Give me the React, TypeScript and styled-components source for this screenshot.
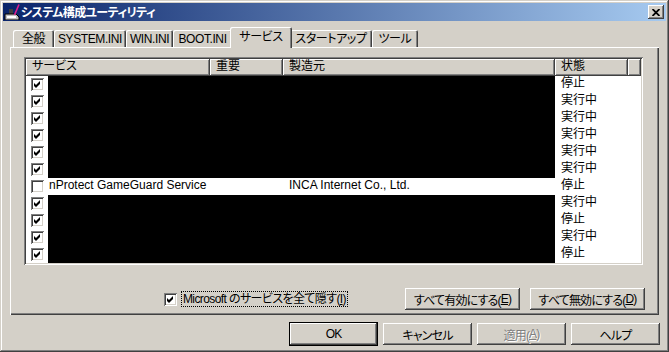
import React from "react";
import styled, { createGlobalStyle, css } from "styled-components";

const GlobalStyle = createGlobalStyle`
  html, body {
    margin: 0;
    padding: 0;
    background: #d4d0c8;
  }
  body {
    font-family: "Liberation Sans", "Noto Sans CJK JP", sans-serif;
    font-size: 12px;
    font-feature-settings: "palt";
    color: #000;
  }
`;

const raised = css`
  box-shadow: inset -1px -1px #404040, inset 1px 1px #fff, inset -2px -2px #808080, inset 2px 2px #d4d0c8;
`;

type Service = {
  checked: boolean;
  name?: string;
  maker?: string;
  status: string;
};

const services: Service[] = [
  { checked: true, status: "停止" },
  { checked: true, status: "実行中" },
  { checked: true, status: "実行中" },
  { checked: true, status: "実行中" },
  { checked: true, status: "実行中" },
  { checked: true, status: "実行中" },
  { checked: false, name: "nProtect GameGuard Service", maker: "INCA Internet Co., Ltd.", status: "停止" },
  { checked: true, status: "実行中" },
  { checked: true, status: "停止" },
  { checked: true, status: "実行中" },
  { checked: true, status: "停止" },
];

const tabs = [
  { label: "全般", w: 41 },
  { label: "SYSTEM.INI", w: 72 },
  { label: "WIN.INI", w: 47 },
  { label: "BOOT.INI", w: 59 },
  { label: "サービス", w: 62, active: true },
  { label: "スタートアップ", w: 82 },
  { label: "ツール", w: 46 },
];

const columns = [
  { label: "サービス", w: 184 },
  { label: "重要", w: 73 },
  { label: "製造元", w: 272 },
  { label: "状態", w: 73 },
];

const Check = ({ checked }: { checked: boolean }) => (
  <CheckBox>
    {checked && (
      <svg width="13" height="13" viewBox="0 0 13 13">
        <polygon points="3,5 5,7 9,3 9,6 5,10 3,8" fill="#000" />
      </svg>
    )}
  </CheckBox>
);

const AppIcon = () => (
  <svg width="16" height="16" viewBox="0 0 16 16">
    <rect x="5" y="5" width="4" height="5" fill="#404040" />
    <polygon points="1,10 12,10 15,13 15,16 1,16" fill="#c0c0c0" stroke="#000" strokeWidth="1" />
    <rect x="3" y="12" width="9" height="2" fill="#fff" />
    <line x1="15" y1="0.5" x2="10.5" y2="11" stroke="#e0208f" strokeWidth="1.6" />
  </svg>
);

export default function App() {
  return (
    <>
      <GlobalStyle />
      <Window>
        <TitleBar>
          <AppIcon />
          <Title>システム構成ユーティリティ</Title>
          <CloseButton>
            <svg width="8" height="7" viewBox="0 0 8 7">
              <path d="M0.5 0 L7.5 7 M7.5 0 L0.5 7" stroke="#000" strokeWidth="1.8" />
            </svg>
          </CloseButton>
        </TitleBar>

        <Content>
          <TabStrip>
            {tabs.map((t) => (
              <Tab key={t.label} $w={t.w} $active={t.active}>
                {t.label}
              </Tab>
            ))}
          </TabStrip>

          <Panel>
            <ListView>
              <HeaderRow>
                {columns.map((c) => (
                  <HeaderCell key={c.label} $w={c.w}>
                    {c.label}
                  </HeaderCell>
                ))}
                <HeaderCell />
              </HeaderRow>
              {services.map((s, i) => (
                <Row key={i}>
                  <CheckCell>
                    <Check checked={s.checked} />
                  </CheckCell>
                  {s.name ? (
                    <>
                      <Cell $w={162} $pad={1}>{s.name}</Cell>
                      <Cell $w={73} $pad={6} />
                      <Cell $w={272} $pad={6}>{s.maker}</Cell>
                    </>
                  ) : (
                    <Blackout />
                  )}
                  <Cell $pad={6}>{s.status}</Cell>
                </Row>
              ))}
            </ListView>

            <PanelFooter>
              <HideOption>
                <Check checked />
                <FocusLabel>
                  Microsoft のサービスを全て隠す(<u>I</u>)
                </FocusLabel>
              </HideOption>
              <Button $w={115}>
                すべて有効にする(<u>E</u>)
              </Button>
              <Button $w={115}>
                すべて無効にする(<u>D</u>)
              </Button>
            </PanelFooter>
          </Panel>

          <DialogButtons>
            <Button $w={89} $default>OK</Button>
            <Button $w={89}>キャンセル</Button>
            <Button $w={89} $disabled>
              適用(<u>A</u>)
            </Button>
            <Button $w={89}>ヘルプ</Button>
          </DialogButtons>
        </Content>
      </Window>
    </>
  );
}

const Window = styled.div`
  width: 669px;
  height: 352px;
  box-sizing: border-box;
  padding: 3px;
  background: #d4d0c8;
  display: flex;
  flex-direction: column;
  box-shadow: inset -1px -1px #404040, inset 1px 1px #d4d0c8, inset -2px -2px #808080, inset 2px 2px #fff;
`;

const TitleBar = styled.div`
  height: 18px;
  display: flex;
  align-items: center;
  gap: 1px;
  padding: 0 2px 0 1px;
  background: linear-gradient(to right, #0a246a, #a6caf0);
`;

const Title = styled.span`
  flex: 1;
  color: #fff;
  font-weight: bold;
  font-size: 12px;
  letter-spacing: -0.6px;
  line-height: 18px;
  font-family: "Noto Sans CJK JP", sans-serif;
`;

const CloseButton = styled.div`
  width: 16px;
  height: 14px;
  display: flex;
  align-items: center;
  justify-content: center;
  background: #d4d0c8;
  ${raised};
`;

const Content = styled.div`
  flex: 1;
  display: flex;
  flex-direction: column;
  padding: 6px 7px 0 7px;
`;

const TabStrip = styled.div`
  height: 20px;
  display: flex;
  align-items: flex-end;
  padding-left: 3px;
`;

const Tab = styled.div<{ $w: number; $active?: boolean }>`
  width: ${(p) => p.$w}px;
  height: ${(p) => (p.$active ? 21 : 17)}px;
  margin: 0 ${(p) => (p.$active ? -2 : 0)}px ${(p) => (p.$active ? -1 : 0)}px;
  box-sizing: border-box;
  flex-shrink: 0;
  display: flex;
  align-items: center;
  justify-content: center;
  padding-bottom: ${(p) => (p.$active ? 2 : 0)}px;
  position: relative;
  z-index: ${(p) => (p.$active ? 1 : 0)};
  background: #d4d0c8;
  border-radius: 2px 2px 0 0;
  line-height: 14px;
  letter-spacing: -0.4px;
  white-space: nowrap;
  box-shadow: inset 1px 1px #fff, inset -1px 0 #404040, inset -2px 0 #808080;
`;

const Panel = styled.div`
  height: 268px;
  box-sizing: border-box;
  padding: 10px 14px 5px 14px;
  display: flex;
  flex-direction: column;
  box-shadow: inset 1px 1px #fff, inset -1px -1px #404040, inset -2px -2px #808080;
`;

const ListView = styled.div`
  width: 619px;
  height: 208px;
  box-sizing: border-box;
  padding: 2px;
  background: #fff;
  overflow: hidden;
  box-shadow: inset 1px 1px #808080, inset -1px -1px #fff, inset 2px 2px #404040, inset -2px -2px #d4d0c8;
`;

const HeaderRow = styled.div`
  display: flex;
  height: 17px;
`;

const HeaderCell = styled.div<{ $w?: number }>`
  ${(p) => (p.$w ? `width: ${p.$w}px;` : "flex: 1;")}
  box-sizing: border-box;
  padding-left: 6px;
  background: #d4d0c8;
  line-height: 15px;
  white-space: nowrap;
  ${raised};
`;

const Row = styled.div`
  display: flex;
  height: 17px;
`;

const CheckCell = styled.div`
  width: 22px;
  flex-shrink: 0;
  display: flex;
  align-items: center;
  padding-left: 5px;
  box-sizing: border-box;
`;

const Cell = styled.div<{ $w?: number; $pad: number }>`
  ${(p) => (p.$w ? `width: ${p.$w}px;` : "flex: 1;")}
  flex-shrink: 0;
  box-sizing: border-box;
  padding-left: ${(p) => p.$pad}px;
  line-height: 15px;
  white-space: nowrap;
  overflow: hidden;
`;

const Blackout = styled.div`
  width: 507px;
  flex-shrink: 0;
  background: #000;
`;

const CheckBox = styled.span`
  width: 13px;
  height: 13px;
  flex-shrink: 0;
  display: inline-flex;
  background: #fff;
  box-shadow: inset 1px 1px #808080, inset -1px -1px #fff, inset 2px 2px #404040, inset -2px -2px #d4d0c8;
`;

const PanelFooter = styled.div`
  margin-top: 23px;
  height: 22px;
  display: flex;
  align-items: center;
  justify-content: flex-end;
  gap: 10px;
`;

const HideOption = styled.div`
  display: flex;
  align-items: center;
  gap: 5px;
  margin-right: 48px;
`;

const FocusLabel = styled.span`
  outline: 1px dotted #000;
  padding: 0 1px;
  line-height: 14px;
  letter-spacing: -0.6px;
  white-space: nowrap;
`;

const Button = styled.div<{ $w: number; $default?: boolean; $disabled?: boolean }>`
  width: ${(p) => p.$w}px;
  height: ${(p) => (p.$default ? 24 : 22)}px;
  box-sizing: border-box;
  display: flex;
  align-items: center;
  justify-content: center;
  background: #d4d0c8;
  white-space: nowrap;
  letter-spacing: -0.8px;
  color: ${(p) => (p.$disabled ? "#808080" : "#000")};
  text-shadow: ${(p) => (p.$disabled ? "1px 1px #fff" : "none")};
  ${(p) =>
    p.$default
      ? "box-shadow: inset 0 0 0 1px #000, inset -2px -2px #404040, inset 2px 2px #fff, inset -3px -3px #808080;"
      : raised}
  u {
    text-decoration-thickness: 1px;
  }
`;

const DialogButtons = styled.div`
  margin-top: 7px;
  margin-right: -1px;
  height: 24px;
  display: flex;
  align-items: center;
  justify-content: flex-end;
  gap: 5px;
`;
